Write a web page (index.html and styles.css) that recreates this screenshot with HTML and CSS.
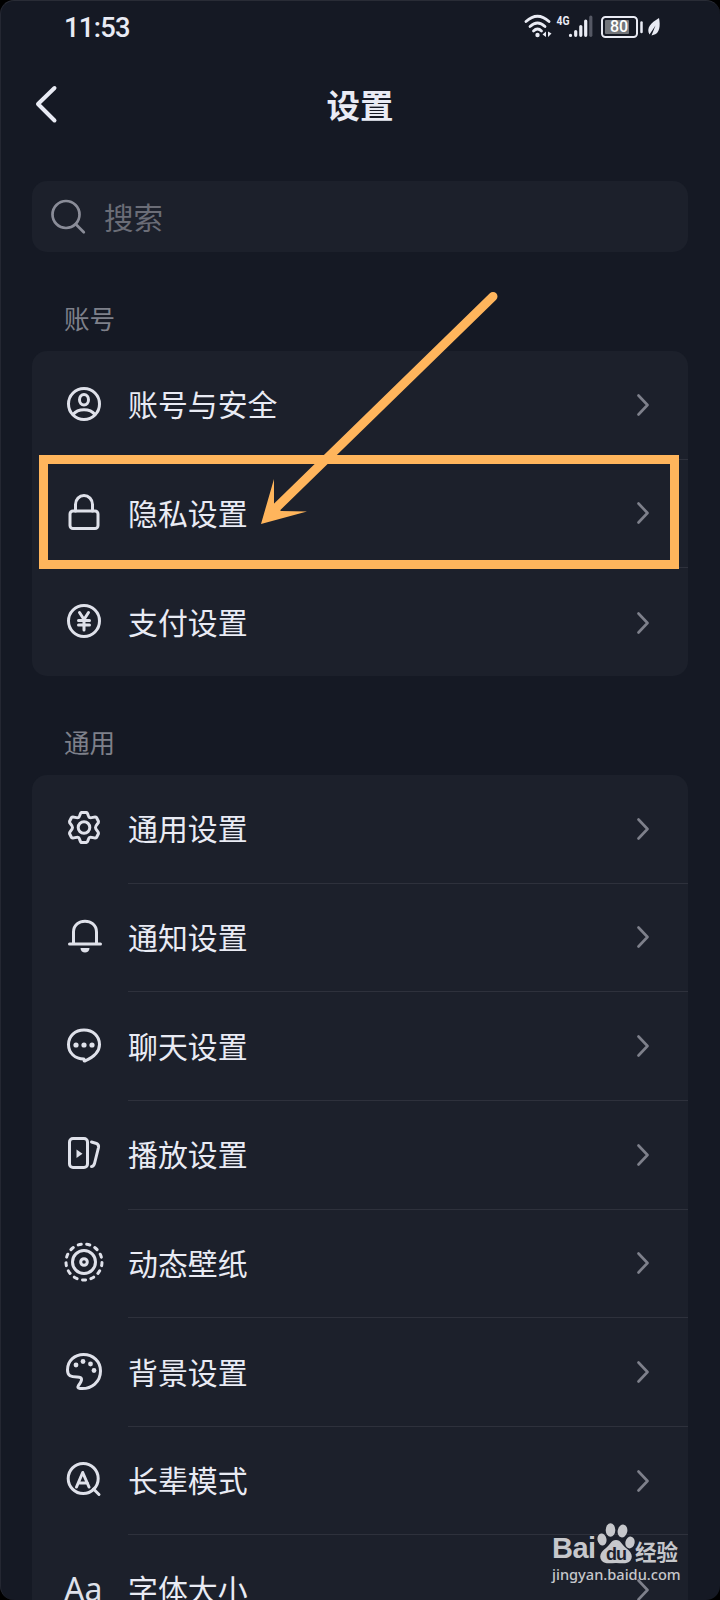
FILE: index.html
```html
<!DOCTYPE html>
<html lang="zh-CN">
    <head>
        <meta charset="UTF-8" />
        <meta name="viewport" content="width=device-width, initial-scale=1.0" />
        <title>设置</title>
        <link rel="stylesheet" href="styles.css">
    </head>
    <body>
        <div class="screen">
            <!-- Status bar -->
            <div class="status-bar">
                <span class="time">11:53</span>
                <svg class="status-icons" width="140" height="30" viewBox="0 0 140 30">
                    <g fill="none" stroke="#e9ebf4" stroke-width="2.8" stroke-linecap="round">
                        <path d="M2 8.500Q13.500 -2 25 8.500"></path>
                        <path d="M6 13.500Q13.500 6.500 21 13.500"></path>
                        <path d="M9.500 18Q13.500 14 17.500 18"></path>
                    </g>
                    <circle cx="13.500" cy="22" r="2.200" fill="#e9ebf4"></circle>
                    <path d="M22 18.500V24L18.500 21.500ZM24 18.500V24L27.500 20.500Z" fill="#e9ebf4"></path>
                    <text class="network" x="32.500" y="12" textLength="13" lengthAdjust="spacingAndGlyphs">4G</text>
                    <g stroke="#e9ebf4" stroke-width="3.200" stroke-linecap="round">
                        <path d="M46.500 22.300V22.400M51.700 18.500V22.300M56.800 13.500V22.300M61.700 8V22.300"></path>
                        <path d="M66.800 4V22.300" stroke="#555864"></path>
                    </g>
                    <rect x="78" y="4" width="35" height="20" rx="3.500" fill="none" stroke="#e9ebf4" stroke-width="2"></rect>
                    <rect x="81" y="7" width="24" height="14" rx="1" fill="#73767b"></rect>
                    <path d="M117.500 9.500V19" stroke="#e9ebf4" stroke-width="2.500" stroke-linecap="round"></path>
                    <text class="battery" x="86" y="19.300">80</text>
                    <path d="M135 5C136.500 12 136 21 129 22L127.500 22.500L131.500 12.500L125.500 21.500C122 15 126.500 10 135 5Z" fill="#e9ebf4"></path>
                </svg>
            </div>

            <!-- Title -->
            <header class="header">
                <svg class="back" width="40" height="44" viewBox="0 0 40 44">
                    <path d="M26.500 6L10 22L26.500 38.500"></path>
                </svg>
                <h1>设置</h1>
            </header>

            <div class="search">
                <svg width="40" height="40" viewBox="0 0 40 40">
                    <circle cx="19" cy="17.500" r="13.500"></circle>
                    <path d="M28.800 27.300L36.800 35.300"></path>
                </svg>
                <span>搜索</span>
            </div>

            <h2>账号</h2>
            <div class="card card-account">
                <div class="row">
                    <svg class="icon" viewBox="0 0 40 40">
                        <circle cx="20" cy="20" r="15.500"></circle>
                        <ellipse cx="20" cy="15.800" rx="4.500" ry="5.300"></ellipse>
                        <path d="M9 30.500C14 24 26 24 31 30.500"></path>
                    </svg>
                    <div class="label">账号与安全<svg class="chevron" viewBox="0 0 12 22"><path d="M1.500 1.500L10.500 11L1.500 20.500"></path></svg></div>
                </div>
                <div class="row">
                    <svg class="icon" viewBox="0 0 40 40">
                        <rect x="6" y="19" width="28" height="17.500" rx="3"></rect>
                        <path d="M11.500 19V12.500A8.500 9 0 0 1 28.500 12.500V19"></path>
                    </svg>
                    <div class="label">隐私设置<svg class="chevron" viewBox="0 0 12 22"><path d="M1.500 1.500L10.500 11L1.500 20.500"></path></svg></div>
                </div>
                <div class="row">
                    <svg class="icon" viewBox="0 0 40 40">
                        <circle cx="20" cy="20" r="15.500"></circle>
                        <path d="M15.500 11.500L20 18.500L24.500 11.500M20 18.500V29M14.500 19.500H25.500M14.500 24H25.500"></path>
                    </svg>
                    <div class="label">支付设置<svg class="chevron" viewBox="0 0 12 22"><path d="M1.500 1.500L10.500 11L1.500 20.500"></path></svg></div>
                </div>
            </div>

            <h2 class="general-title">通用</h2>
            <div class="card">
                <div class="row">
                    <svg class="icon" viewBox="0 0 40 40">
                        <path d="M17.500 4.500H22.500C24 4.500 24 9 25.500 9.500C27.500 10.500 31 8 32.500 9.500L34.500 13.500C35 15.500 31.500 17 31.500 19.500S35 23.500 34.500 25.500L32.500 29.500C31 31 27.500 28.500 25.500 29.500C24 30.500 24 34.500 22.500 34.500H17.500C16 34.500 16 30.500 14.500 29.500C12.500 28.500 9 31 7.500 29.500L5.500 25.500C5 23.500 8.500 22 8.500 19.500S5 15.500 5.500 13.500L7.500 9.500C9 8 12.500 10.500 14.500 9.500C16 9 16 4.500 17.500 4.500Z"></path>
                        <circle cx="20" cy="19.500" r="5.800"></circle>
                    </svg>
                    <div class="label">通用设置<svg class="chevron" viewBox="0 0 12 22"><path d="M1.500 1.500L10.500 11L1.500 20.500"></path></svg></div>
                </div>
                <div class="row">
                    <svg class="icon" viewBox="0 0 40 40">
                        <path d="M5.500 28H36.500M9.500 28V16C9.500 1.500 32.500 1.500 32.500 16V28"></path>
                        <path class="fill" d="M16.500 32H25.500C25.500 38 16.500 38 16.500 32Z"></path>
                    </svg>
                    <div class="label">通知设置<svg class="chevron" viewBox="0 0 12 22"><path d="M1.500 1.500L10.500 11L1.500 20.500"></path></svg></div>
                </div>
                <div class="row">
                    <svg class="icon" viewBox="0 0 40 40">
                        <path d="M20 34C10.500 34 4.500 27.500 4.500 19.500C4.500 11 11 5 20 5S35.500 11 35.500 19.500C35.500 27 30 32 21 36C20 36.300 20 35.500 20 34Z"></path>
                        <g class="fill">
                            <circle cx="12" cy="20" r="2.600"></circle>
                            <circle cx="20" cy="20" r="2.600"></circle>
                            <circle cx="28" cy="20" r="2.600"></circle>
                        </g>
                    </svg>
                    <div class="label">聊天设置<svg class="chevron" viewBox="0 0 12 22"><path d="M1.500 1.500L10.500 11L1.500 20.500"></path></svg></div>
                </div>
                <div class="row">
                    <svg class="icon" viewBox="0 0 40 40">
                        <rect x="5.500" y="5.500" width="18" height="29" rx="3.500"></rect>
                        <path class="fill" d="M12.500 16.500V25L18.500 20.800Z"></path>
                        <path d="M27.500 9L32.500 10.500Q35 11.500 34.500 14.500L30.500 30.500Q29.500 33.500 27.500 33.500"></path>
                    </svg>
                    <div class="label">播放设置<svg class="chevron" viewBox="0 0 12 22"><path d="M1.500 1.500L10.500 11L1.500 20.500"></path></svg></div>
                </div>
                <div class="row">
                    <svg class="icon" viewBox="0 0 40 40">
                        <circle cx="20" cy="20" r="18" pathLength="130" stroke-dasharray="3.600 6.400" transform="rotate(85 20 20)"></circle>
                        <circle cx="20" cy="20" r="11.500"></circle>
                        <circle cx="20" cy="20" r="3.300"></circle>
                    </svg>
                    <div class="label">动态壁纸<svg class="chevron" viewBox="0 0 12 22"><path d="M1.500 1.500L10.500 11L1.500 20.500"></path></svg></div>
                </div>
                <div class="row">
                    <svg class="icon" viewBox="0 0 40 40">
                        <path d="M14.500 34.500C19 28.500 18.500 26 13 26C7 26 3.500 25 3.500 19C3.500 9.500 11 3.500 19.500 3.500C29 3.500 36.500 10.500 36.500 20C36.500 30.500 28 38.500 16 37.500C13.500 37.200 13.500 36 14.500 34.500Z"></path>
                        <g class="fill">
                            <circle cx="12" cy="14" r="2.400"></circle>
                            <circle cx="19" cy="10.500" r="2.400"></circle>
                            <circle cx="26.500" cy="13" r="2.400"></circle>
                            <circle cx="30" cy="19.500" r="2.400"></circle>
                        </g>
                    </svg>
                    <div class="label">背景设置<svg class="chevron" viewBox="0 0 12 22"><path d="M1.500 1.500L10.500 11L1.500 20.500"></path></svg></div>
                </div>
                <div class="row">
                    <svg class="icon" viewBox="0 0 40 40">
                        <circle cx="19.200" cy="19.500" r="15"></circle>
                        <path d="M12.500 28L18.700 13.500L25 28M14.500 24H23.500M29.500 30L35 35.500"></path>
                    </svg>
                    <div class="label">长辈模式<svg class="chevron" viewBox="0 0 12 22"><path d="M1.500 1.500L10.500 11L1.500 20.500"></path></svg></div>
                </div>
                <div class="row">
                    <span class="icon icon-text">Aa</span>
                    <div class="label">字体大小<svg class="chevron" viewBox="0 0 12 22"><path d="M1.500 1.500L10.500 11L1.500 20.500"></path></svg></div>
                </div>
            </div>

            <!-- Highlight and arrow over the privacy row -->
            <div class="highlight"></div>
            <svg class="arrow" width="250" height="250" viewBox="0 0 250 250">
                <path d="M236 15.500L19 227" stroke="#ffb55c" stroke-width="9" stroke-linecap="round"></path>
                <path d="M4 243L17 198V223L24 230L50 230.500Z" fill="#ffb55c"></path>
            </svg>

            <!-- Watermark -->
            <div class="watermark">
                <div class="brand">
                    <span class="bai">Bai</span>
                    <svg width="38" height="42" viewBox="0 0 38 42">
                        <g fill="#c6c7cb">
                            <ellipse cx="5" cy="17.500" rx="4.500" ry="6" transform="rotate(-10 5 17.500)"></ellipse>
                            <ellipse cx="13.500" cy="8" rx="4.800" ry="6.700"></ellipse>
                            <ellipse cx="25.500" cy="9" rx="4.800" ry="6.500" transform="rotate(12 25.500 9)"></ellipse>
                            <ellipse cx="33" cy="20.500" rx="4.600" ry="6" transform="rotate(12 33 20.500)"></ellipse>
                            <path d="M19 18C24 18 25 23 29 26C34 29.500 36.500 34 33.500 38.500C30 42.500 25 41 19 41S8 42.500 4.500 38.500C1.500 34 4 29.500 9 26C13 23 14 18 19 18Z"></path>
                        </g>
                        <text class="du" x="9" y="38">du</text>
                    </svg>
                    <span class="jingyan">经验</span>
                </div>
                <div class="url">jingyan.baidu.com</div>
            </div>
        </div>
    </body>
</html>
```
FILE: styles.css
```css
* {
    margin: 0;
    padding: 0;
    box-sizing: border-box;
}

body {
    background-color: #000;
    font-family: "Noto Sans CJK SC", sans-serif;
    color: #e9ebf4;
}

.screen {
    position: relative;
    width: 720px;
    height: 1600px;
    overflow: hidden;
    background-color: #151924;
    border-top: 1px solid #292c36;
    border-left: 1px solid #242732;
    border-radius: 14px;
    padding: 0 32px 0 31px;
}

/* Status bar */
.status-bar {
    display: flex;
    justify-content: space-between;
    height: 54px;
    padding: 12px 0 0 32px;
}

.time {
    font-family: Roboto, sans-serif;
    font-size: 27.3px;
    font-weight: 500;
    line-height: 31px;
    letter-spacing: -0.7px;
}

.status-icons {
    margin-right: 24px;
}

.network {
    font: 700 12.5px Roboto, sans-serif;
    fill: #e9ebf4;
}

.battery {
    font: 500 16px Roboto, sans-serif;
    fill: #fff;
}

/* Header */
.header {
    display: grid;
    grid-template-columns: 40px 1fr 40px;
    align-items: center;
    height: 98px;
    margin-bottom: 28px;
}

.back {
    margin-left: -4px;
    fill: none;
    stroke: #e9ebf4;
    stroke-width: 4;
    stroke-linecap: round;
    stroke-linejoin: round;
}

h1 {
    font-size: 33.5px;
    font-weight: 700;
    line-height: 40px;
    text-align: center;
}

/* Search */
.search {
    display: flex;
    align-items: center;
    height: 71px;
    padding-left: 15px;
    border-radius: 15px;
    background-color: #1c202b;
    color: #6b6d77;
    font-size: 29.5px;
    line-height: 40px;
}

.search svg {
    margin-right: 17px;
    fill: none;
    stroke: #8a8c98;
    stroke-width: 2.7;
    stroke-linecap: round;
}

.search span {
    margin-top: -1px;
}

/* Sections */
h2 {
    height: 99px;
    padding: 48px 0 0 32px;
    color: #7e808a;
    font-size: 25.6px;
    font-weight: 400;
    line-height: 36px;
}

.general-title {
    height: 99.5px;
}

.card {
    border-radius: 15px;
    background-color: #1c202b;
    overflow: hidden;
}

.card-account {
    height: 324.5px;
}

.row {
    display: flex;
    align-items: stretch;
    height: 108.65px;
    padding-left: 32px;
}

.icon {
    flex: none;
    width: 40px;
    height: 40px;
    margin: 32.5px 24px 0 0;
    fill: none;
    stroke: #dfe1ea;
    stroke-width: 3;
    stroke-linecap: round;
    stroke-linejoin: round;
}

.icon .fill {
    fill: #dfe1ea;
    stroke: none;
}

.icon-text {
    font-family: "Noto Sans", sans-serif;
    font-size: 32px;
    line-height: 42px;
    color: #dfe1ea;
}

.label {
    flex: 1;
    display: flex;
    align-items: center;
    justify-content: space-between;
    padding-right: 39px;
    padding-bottom: 3px;
    border-bottom: 1px solid #2e313c;
    font-size: 29.9px;
    line-height: 40px;
}

.row:last-child .label {
    border-bottom: none;
}

.chevron {
    width: 12px;
    height: 22px;
    margin-top: 3px;
    fill: none;
    stroke: #7e808b;
    stroke-width: 2.6;
    stroke-linecap: round;
    stroke-linejoin: round;
}

/* Highlight */
.highlight {
    position: absolute;
    left: 38px;
    top: 454px;
    width: 640px;
    height: 114px;
    border: 9px solid #ffb55c;
}

.arrow {
    position: absolute;
    left: 256px;
    top: 280px;
}

/* Watermark */
.watermark {
    position: absolute;
    left: 551px;
    top: 1521px;
    color: #c6c7cb;
}

.brand {
    display: flex;
    align-items: flex-end;
    height: 42px;
}

.bai {
    width: 45px;
    font: 700 29px/30px "Liberation Sans", sans-serif;
    letter-spacing: -0.5px;
    margin-bottom: 1px;
}

.du {
    font: 700 18px "Liberation Sans", sans-serif;
    letter-spacing: -1px;
    fill: #1c202b;
}

.jingyan {
    font-size: 21.5px;
    font-weight: 700;
    line-height: 27px;
}

.url {
    font: 500 14.6px/20px "Noto Sans", sans-serif;
}
```
